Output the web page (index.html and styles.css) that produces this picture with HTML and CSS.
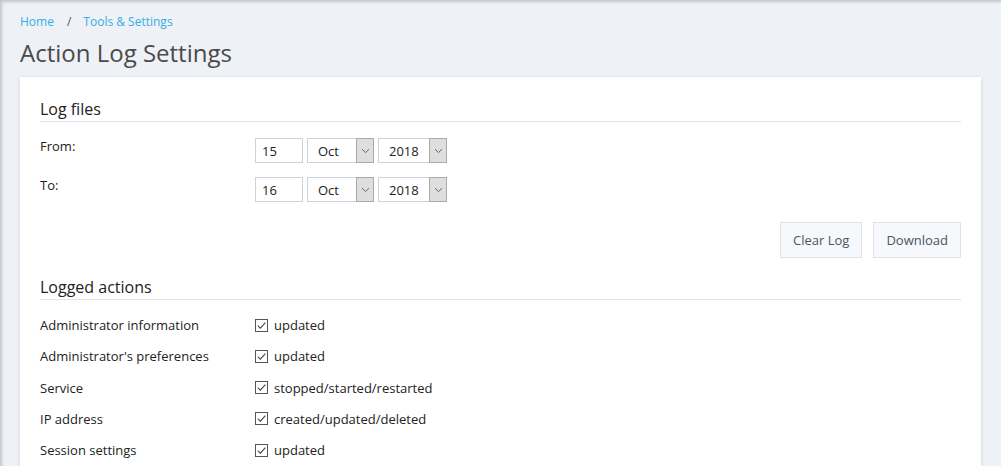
FILE: index.html
```html
<!DOCTYPE html>
<html>
<head>
<meta charset="utf-8">
<link rel="stylesheet" href="styles.css">
</head>
<body>
<div class="page">
  <nav class="crumbs"><a class="crumb">Home</a><span class="sep">/</span><a class="crumb">Tools &amp; Settings</a></nav>
  <h1 class="title">Action Log Settings</h1>
  <div class="card">
    <h2 class="section">Log files</h2>
    <div class="row date-row">
      <div class="label">From:</div>
      <div class="controls">
        <div class="input day">15</div>
        <div class="select month"><span class="val">Oct</span><span class="arrow"><svg width="9" height="6" viewBox="0 0 9 6"><path d="M1 1.2 L4.5 4.6 L8 1.2" fill="none" stroke="#666" stroke-width="1"/></svg></span></div>
        <div class="select year"><span class="val">2018</span><span class="arrow"><svg width="9" height="6" viewBox="0 0 9 6"><path d="M1 1.2 L4.5 4.6 L8 1.2" fill="none" stroke="#666" stroke-width="1"/></svg></span></div>
      </div>
    </div>
    <div class="row date-row">
      <div class="label">To:</div>
      <div class="controls">
        <div class="input day">16</div>
        <div class="select month"><span class="val">Oct</span><span class="arrow"><svg width="9" height="6" viewBox="0 0 9 6"><path d="M1 1.2 L4.5 4.6 L8 1.2" fill="none" stroke="#666" stroke-width="1"/></svg></span></div>
        <div class="select year"><span class="val">2018</span><span class="arrow"><svg width="9" height="6" viewBox="0 0 9 6"><path d="M1 1.2 L4.5 4.6 L8 1.2" fill="none" stroke="#666" stroke-width="1"/></svg></span></div>
      </div>
    </div>
    <div class="actions">
      <button class="btn">Clear Log</button>
      <button class="btn">Download</button>
    </div>
    <h2 class="section">Logged actions</h2>
    <div class="row check-row"><div class="label">Administrator information</div><label class="check"><span class="box"><svg width="11" height="11" viewBox="0 0 11 11"><path d="M1.8 5.6 L4.3 8.1 L9.4 2.6" fill="none" stroke="#444" stroke-width="1.1"/></svg></span>updated</label></div>
    <div class="row check-row"><div class="label">Administrator's preferences</div><label class="check"><span class="box"><svg width="11" height="11" viewBox="0 0 11 11"><path d="M1.8 5.6 L4.3 8.1 L9.4 2.6" fill="none" stroke="#444" stroke-width="1.1"/></svg></span>updated</label></div>
    <div class="row check-row"><div class="label">Service</div><label class="check"><span class="box"><svg width="11" height="11" viewBox="0 0 11 11"><path d="M1.8 5.6 L4.3 8.1 L9.4 2.6" fill="none" stroke="#444" stroke-width="1.1"/></svg></span>stopped/started/restarted</label></div>
    <div class="row check-row"><div class="label">IP address</div><label class="check"><span class="box"><svg width="11" height="11" viewBox="0 0 11 11"><path d="M1.8 5.6 L4.3 8.1 L9.4 2.6" fill="none" stroke="#444" stroke-width="1.1"/></svg></span>created/updated/deleted</label></div>
    <div class="row check-row"><div class="label">Session settings</div><label class="check"><span class="box"><svg width="11" height="11" viewBox="0 0 11 11"><path d="M1.8 5.6 L4.3 8.1 L9.4 2.6" fill="none" stroke="#444" stroke-width="1.1"/></svg></span>updated</label></div>
  </div>
</div>
</body>
</html>
```
FILE: styles.css
```css
html, body {
  margin: 0;
  padding: 0;
  height: 100%;
  overflow: hidden;
}
body {
  background: #eef1f6;
  font-family: "Open Sans", "DejaVu Sans", sans-serif;
  color: #222;
  box-shadow: inset 3px 3px 3px -1px rgba(0,0,0,0.18);
}
.page {
  padding: 14px 20px 0 20px;
}
.crumbs {
  font-size: 12px;
  line-height: 16px;
  display: flex;
  align-items: center;
}
.crumb {
  color: #35aee5;
}
.sep {
  color: #555;
  margin: 0 12px 0 13px;
}
.title {
  margin: 6px 0 0 0;
  font-size: 24px;
  font-weight: 400;
  line-height: 33px;
  color: #4a4a4a;
}
.card {
  margin-top: 8px;
  background: #fff;
  padding: 21px 20px 20px 20px;
  box-shadow: 0 1px 4px rgba(0,0,0,0.12);
  min-height: 400px;
}
.section {
  margin: 0;
  font-size: 16px;
  font-weight: 400;
  line-height: 22px;
  color: #222;
  padding-bottom: 1px;
  border-bottom: 1px solid #dfe3ea;
}
.row {
  display: flex;
  font-size: 13px;
}
.label {
  width: 215px;
  flex: none;
  color: #222;
}
.date-row {
  height: 25px;
  margin-top: 16px;
}
.date-row + .date-row {
  margin-top: 14px;
}
.date-row .label {
  line-height: 16px;
}
.controls {
  display: flex;
  gap: 4px;
}
.input, .select {
  box-sizing: border-box;
  height: 25px;
  border: 1px solid #ccd3dc;
  display: flex;
  align-items: center;
  font-size: 13px;
  color: #222;
  background: #fff;
}
.day {
  width: 48px;
  padding-left: 6px;
}
.month { width: 67px; }
.year { width: 69px; }
.val {
  flex: 1;
  padding-left: 10px;
}
.arrow {
  box-sizing: border-box;
  width: 18px;
  height: 25px;
  margin: -1px -1px -1px 0;
  border: 1px solid #aaa;
  background: #dedede;
  display: flex;
  align-items: center;
  justify-content: center;
}
.actions {
  display: flex;
  justify-content: flex-end;
  gap: 11px;
  margin-top: 20px;
  margin-bottom: 18px;
}
.btn {
  font-family: "Open Sans", "DejaVu Sans", sans-serif;
  font-size: 13px;
  color: #4a5566;
  background: #f6f8fb;
  border: 1px solid #dde2e8;
  height: 36px;
  padding: 0 12px;
}
.check-row {
  line-height: 18px;
  margin-top: 13.3px;
}
.section + .check-row {
  margin-top: 16px;
}
.check {
  display: flex;
  align-items: center;
  color: #222;
}
.box {
  box-sizing: border-box;
  width: 13px;
  height: 13px;
  border: 1px solid #555;
  margin-right: 6px;
  display: flex;
  align-items: center;
  justify-content: center;
}
.box svg { display: block; }
```
